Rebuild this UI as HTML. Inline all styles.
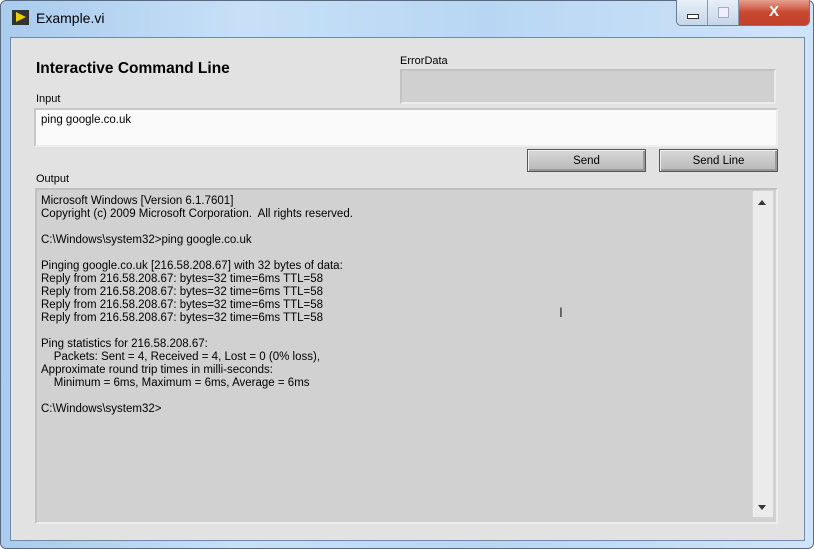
<!DOCTYPE html><html><head><style>
body{margin:0;width:814px;height:549px;overflow:hidden;background:#fff;font-family:"Liberation Sans",sans-serif;position:relative}
.frame{position:absolute;left:0;top:0;width:812px;height:547px;border:1px solid #5a6a7e;border-radius:6px;background:linear-gradient(90deg,#a9cbed,#c7e0f7 30%,#b8d6f3 60%,#cfe4f8);}
.client{position:absolute;left:10px;top:37px;width:793px;height:502px;background:#e2e2e2;border:1px solid #6f8aa8}
.a{position:absolute}
.lbl{font-size:11px;color:#000}
.btn{position:absolute;height:21px;border:1px solid #555;background:linear-gradient(#d8d8d8,#b8b8b8);box-shadow:inset 1px 1px 0 #f0f0f0,inset -2px -2px 0 #999;font-size:11.5px;text-align:center;line-height:22px}
pre{margin:0;font-family:"Liberation Sans",sans-serif;font-size:11.5px;line-height:13px;white-space:pre}
</style></head><body>
<div class="frame"></div>
<div class="a" style="left:12px;top:10px;width:17px;height:15px;background:#333"><div style="position:absolute;left:4px;top:2px;width:0;height:0;border-left:10px solid #e8d000;border-top:5px solid transparent;border-bottom:5px solid transparent"></div></div>
<div class="a" style="left:36px;top:10px;font-size:14px;color:#000">Example.vi</div>
<div class="a" style="left:676px;top:0;width:132px;height:25px;border:1px solid #6a7b90;border-top:none;border-radius:0 0 5px 5px;overflow:hidden;background:linear-gradient(#e8f0f8,#c5d6ea)">
<div class="a" style="left:0;top:0;width:30px;height:25px;border-right:1px solid #8899aa"><div class="a" style="left:10px;top:14px;width:10px;height:3px;background:#fff;border:1px solid #333"></div></div>
<div class="a" style="left:31px;top:0;width:30px;height:25px;border-right:1px solid #8899aa"><div class="a" style="left:10px;top:7px;width:9px;height:9px;border:1px solid #aab;background:#eef"></div></div>
<div class="a" style="left:62px;top:0;width:70px;height:25px;background:linear-gradient(#e6a090,#c84830 50%,#c0402a);color:#fff;font-weight:bold;font-size:15px;text-align:center;line-height:24px">X</div>
</div>
<div class="client"></div>
<div class="a" style="left:36px;top:60px;font-size:15.5px;font-weight:bold">Interactive Command Line</div>
<div class="a lbl" style="left:400px;top:55px">ErrorData</div>
<div class="a" style="left:400px;top:69px;width:372px;height:31px;background:#d0d0d0;border:2px solid #c2c2c2;border-bottom-color:#ececec;border-right-color:#ececec"></div>
<div class="a lbl" style="left:36px;top:93px">Input</div>
<div class="a" style="left:34px;top:108px;width:740px;height:35px;background:#fafafa;border:2px solid #c8c8c8;border-bottom-color:#eee;border-right-color:#eee"></div>
<div class="a" style="left:41px;top:114px;font-size:11.5px">ping google.co.uk</div>
<div class="btn" style="left:527px;top:149px;width:117px">Send</div>
<div class="btn" style="left:659px;top:149px;width:117px">Send Line</div>
<div class="a lbl" style="left:36px;top:173px">Output</div>
<div class="a" style="left:35px;top:188px;width:739px;height:332px;background:#d1d1d1;border:2px solid #c0c0c0;border-bottom-color:#ededed;border-right-color:#ededed"></div>
<div class="a" style="left:752px;top:191px;width:20px;height:326px;background:#ebebeb;border-left:1px solid #d8d8d8"></div>
<div class="a" style="left:758px;top:200px;width:0;height:0;border-left:4px solid transparent;border-right:4px solid transparent;border-bottom:5px solid #333"></div>
<div class="a" style="left:758px;top:505px;width:0;height:0;border-left:4px solid transparent;border-right:4px solid transparent;border-top:5px solid #333"></div>
<div class="a" style="left:41px;top:195px"><pre>Microsoft Windows [Version 6.1.7601]
Copyright (c) 2009 Microsoft Corporation.  All rights reserved.

C:\Windows\system32&gt;ping google.co.uk

Pinging google.co.uk [216.58.208.67] with 32 bytes of data:
Reply from 216.58.208.67: bytes=32 time=6ms TTL=58
Reply from 216.58.208.67: bytes=32 time=6ms TTL=58
Reply from 216.58.208.67: bytes=32 time=6ms TTL=58
Reply from 216.58.208.67: bytes=32 time=6ms TTL=58

Ping statistics for 216.58.208.67:
    Packets: Sent = 4, Received = 4, Lost = 0 (0% loss),
Approximate round trip times in milli-seconds:
    Minimum = 6ms, Maximum = 6ms, Average = 6ms

C:\Windows\system32&gt;</pre></div>
<div class="a" style="left:559px;top:304px;font-size:14px;color:#333">I</div>
</body></html>
